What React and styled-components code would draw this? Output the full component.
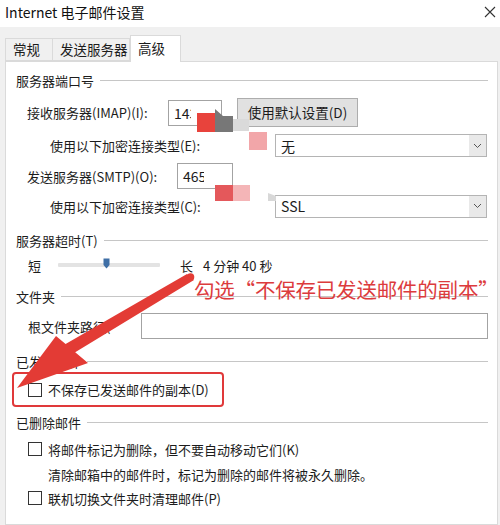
import React from "react";
import styled, { createGlobalStyle } from "styled-components";

const Global = createGlobalStyle`
  html, body { margin: 0; padding: 0; }
  body {
    background: #f0f0f0;
    font-family: "Noto Sans CJK SC", "Noto Sans", sans-serif;
    color: #1c1c1c;
    width: 500px;
    height: 525px;
    overflow: hidden;
  }
`;

const Window = styled.div`
  position: relative;
  width: 500px;
  height: 525px;
  overflow: hidden;
  background: #f0f0f0;
  display: flex;
  flex-direction: column;
`;

const TitleBar = styled.div`
  height: 27px;
  background: #fff;
  display: flex;
  align-items: center;
  justify-content: space-between;
  padding: 0 4px 3px 5px;
  box-sizing: border-box;
  font-size: 14px;
  line-height: 1;
  color: #111;
`;

const TabRow = styled.div`
  margin: 8px 0 0 5px;
  height: 26px;
  display: flex;
  align-items: flex-end;
`;

const Tab = styled.div`
  box-sizing: border-box;
  width: ${(p) => p.$w}px;
  height: ${(p) => (p.$active ? 27 : 23)}px;
  margin-bottom: ${(p) => (p.$active ? -1 : 0)}px;
  background: ${(p) => (p.$active ? "#fff" : "#f0f0f0")};
  border: 1px solid #dadada;
  border-bottom: ${(p) => (p.$active ? "none" : "1px solid #dadada")};
  border-left: ${(p) => (p.$first || p.$active ? "1px solid #dadada" : "none")};
  padding-left: 7px;
  display: flex;
  align-items: center;
  font-size: 13.5px;
  line-height: 1;
  z-index: ${(p) => (p.$active ? 1 : 0)};
`;

const Panel = styled.div`
  margin-left: 5px;
  width: 493px;
  flex: 1;
  box-sizing: border-box;
  background: #fff;
  border: 1px solid #dadada;
  padding: 7px 9px 0 10px;
  display: flex;
  flex-direction: column;
  font-size: 13px;
  line-height: 1;
`;

const GroupHeader = styled.div`
  height: 22px;
  margin-top: ${(p) => p.$mt || 0}px;
  display: flex;
  align-items: center;
  gap: 6px;
  white-space: nowrap;
  &::after {
    content: "";
    flex: 1;
    border-top: 1px solid #c6c6c6;
  }
`;

const Row = styled.div`
  height: ${(p) => p.$h || 22}px;
  margin-top: ${(p) => p.$mt || 0}px;
  padding-left: ${(p) => p.$indent || 0}px;
  display: flex;
  align-items: center;
  white-space: nowrap;
`;

const Label = styled.span`
  min-width: ${(p) => (p.$w ? `${p.$w}px` : "0")};
  flex-shrink: 0;
`;

const TextInput = styled.div`
  box-sizing: border-box;
  width: ${(p) => p.$w}px;
  height: 26px;
  border: 1px solid #a3a3a3;
  background: #fff;
  display: flex;
  align-items: center;
  padding-left: 5px;
  font-size: 14px;
  flex-shrink: 0;
`;

const Button = styled.div`
  box-sizing: border-box;
  margin-left: ${(p) => p.$ml}px;
  width: 121px;
  height: 29px;
  background: #e1e1e1;
  border: 1px solid #adadad;
  display: flex;
  align-items: center;
  justify-content: center;
  font-size: 13.5px;
`;

const Select = styled.div`
  box-sizing: border-box;
  width: 212px;
  height: 23px;
  border: 1px solid #b4b4b4;
  background: #fff;
  display: flex;
  align-items: center;
  justify-content: space-between;
  padding-left: 5px;
  font-size: 14px;
`;

const SelectArrow = styled.div`
  width: 17px;
  height: 21px;
  background: #e9e9e9;
  display: flex;
  align-items: center;
  justify-content: center;
`;

const Track = styled.div`
  position: relative;
  margin: 0 20px 0 17px;
  width: 102px;
  height: 4px;
  background: #e3e3e3;
  border-radius: 1px;
`;

const Thumb = styled.svg`
  position: absolute;
  left: 45px;
  top: -5px;
`;

const Gap = styled.span`
  width: ${(p) => p.$w}px;
  flex-shrink: 0;
`;

const HighlightBox = styled.div`
  box-sizing: border-box;
  margin-left: -4px;
  width: 212px;
  height: 35px;
  border: 2px solid #e0393a;
  border-radius: 4px;
  display: flex;
  align-items: center;
  padding-left: 14px;
  white-space: nowrap;
`;

const Check = styled.span`
  box-sizing: border-box;
  width: 14px;
  height: 14px;
  border: 1px solid #333;
  background: #fff;
  margin-right: 6px;
  flex-shrink: 0;
`;

const Note = styled.div`
  position: absolute;
  left: 194px;
  top: 279px;
  font-size: 20.5px;
  line-height: 1;
  color: #dc3b3d;
  white-space: nowrap;
  letter-spacing: -0.2px;
`;

const Overlay = styled.svg`
  position: absolute;
  left: 0;
  top: 0;
  pointer-events: none;
`;

const Chevron = () => (
  <svg width="9" height="6" viewBox="0 0 9 6">
    <path d="M1 1 L4.5 4.5 L8 1" fill="none" stroke="#555" strokeWidth="1" />
  </svg>
);

export default function App() {
  return (
    <>
      <Global />
      <Window>
        <TitleBar>
          <span>Internet 电子邮件设置</span>
          <svg width="12" height="12" viewBox="0 0 12 12">
            <path d="M1 1 L11 11 M11 1 L1 11" stroke="#333" strokeWidth="1.1" />
          </svg>
        </TitleBar>
        <TabRow>
          <Tab $w={48} $first>常规</Tab>
          <Tab $w={77}>发送服务器</Tab>
          <Tab $w={51} $active>高级</Tab>
        </TabRow>
        <Panel>
          <GroupHeader>服务器端口号</GroupHeader>
          <Row $mt={5} $h={33} $indent={11}>
            <Label $w={141}>接收服务器(IMAP)(I):</Label>
            <TextInput $w={54}>143</TextInput>
            <Button $ml={15}>使用默认设置(D)</Button>
          </Row>
          <Row $h={33} $indent={34}>
            <Label $w={225}>使用以下加密连接类型(E):</Label>
            <Select>
              <span>无</span>
              <SelectArrow><Chevron /></SelectArrow>
            </Select>
          </Row>
          <Row $h={28} $indent={11}>
            <Label $w={150}>发送服务器(SMTP)(O):</Label>
            <TextInput $w={56}>465</TextInput>
          </Row>
          <Row $h={32} $indent={34}>
            <Label $w={225}>使用以下加密连接类型(C):</Label>
            <Select>
              <span>SSL</span>
              <SelectArrow><Chevron /></SelectArrow>
            </Select>
          </Row>

          <GroupHeader $mt={7}>服务器超时(T)</GroupHeader>
          <Row $mt={3} $indent={12}>
            <Label>短</Label>
            <Track>
              <Thumb width="7" height="11" viewBox="0 0 7 11">
                <path d="M0.5 0.5 H6.5 V7 L3.5 10.5 L0.5 7 Z" fill="#3f6fa6" />
              </Thumb>
            </Track>
            <Label>长</Label>
            <Gap $w={10} />
            <Label>4 分钟 40 秒</Label>
          </Row>

          <GroupHeader $mt={9}>文件夹</GroupHeader>
          <Row $mt={4} $h={30} $indent={12}>
            <Label $w={113}>根文件夹路径(</Label>
            <TextInput $w={347} />
          </Row>

          <GroupHeader $mt={9}>已发送邮件</GroupHeader>
          <HighlightBox>
            <Check />
            <span>不保存已发送邮件的副本(D)</span>
          </HighlightBox>

          <GroupHeader $mt={4}>已删除邮件</GroupHeader>
          <Row $mt={5} $indent={12}>
            <Check />
            <span>将邮件标记为删除，但不要自动移动它们(K)</span>
          </Row>
          <Row $mt={3} $indent={32}>
            <span>清除邮箱中的邮件时，标记为删除的邮件将被永久删除。</span>
          </Row>
          <Row $mt={2} $indent={12}>
            <Check />
            <span>联机切换文件夹时清理邮件(P)</span>
          </Row>
        </Panel>

        <Note>勾选“不保存已发送邮件的副本”</Note>

        <Overlay width="500" height="525" viewBox="0 0 500 525">
          {/* redaction marks */}
          <rect x="191" y="101" width="30" height="23" fill="#fff" />
          <rect x="204" y="164" width="28" height="24" fill="#fff" />
          <rect x="197" y="113" width="19" height="19" fill="#e8433c" />
          <polygon points="215,109 223,116 233,116 233,132 215,132" fill="#777" />
          <rect x="233" y="119" width="16" height="12" fill="#dadada" />
          <rect x="249" y="132" width="18" height="18" fill="#f2a6a9" />
          <rect x="215" y="185" width="18" height="16" fill="#e4585b" />
          <rect x="233" y="185" width="17" height="16" fill="#f4b5b7" />
          <polygon points="268,193 276,196 276,201 268,201" fill="#d8d8d8" />
          {/* arrow */}
          <circle cx="190.5" cy="277" r="3.8" fill="#e33b35" />
          <polygon
            points="187,274 65.6,344.1 56,336 17,388 88,363 75.2,352.2 194,280"
            fill="#e33b35"
          />
        </Overlay>
      </Window>
    </>
  );
}
